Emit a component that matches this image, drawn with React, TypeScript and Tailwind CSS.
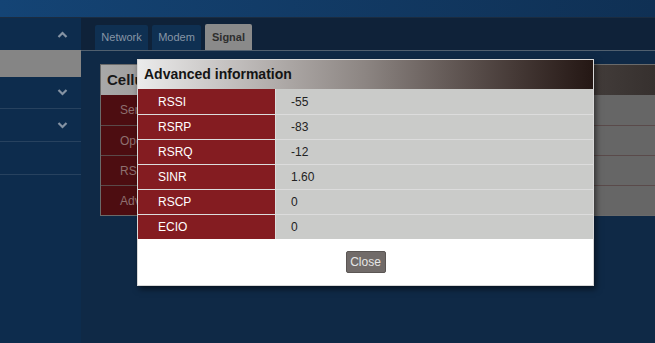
import React from "react";

const rows = [
  { label: "RSSI", value: "-55" },
  { label: "RSRP", value: "-83" },
  { label: "RSRQ", value: "-12" },
  { label: "SINR", value: "1.60" },
  { label: "RSCP", value: "0" },
  { label: "ECIO", value: "0" },
];

const cardRows = ["Serving cell", "Operator", "RSSI", "Advanced information"];

const Chevron = ({ up }: { up?: boolean }) => (
  <svg width="11" height="7" viewBox="0 0 11 7" className="text-[#8593a3]">
    <path
      d={up ? "M1.5 6 L5.5 2 L9.5 6" : "M1.5 1 L5.5 5 L9.5 1"}
      fill="none"
      stroke="currentColor"
      strokeWidth="2.2"
    />
  </svg>
);

const App = () => {
  return (
    <div className="relative w-[655px] h-[343px] overflow-hidden bg-[#0f223b] font-['Liberation_Sans',Arial,sans-serif]">
      {/* header */}
      <div className="h-[18px] bg-gradient-to-r from-[#144475] to-[#0f3054] border-b border-[#1b2c40]" />

      <div className="flex h-[325px]">
        {/* sidebar */}
        <div className="w-[81px] shrink-0 bg-[#0d2c4d] flex flex-col">
          <div className="h-[32px] flex items-center justify-end pr-[13px]">
            <Chevron up />
          </div>
          <div className="h-[27px] bg-[#858585]" />
          <div className="h-[32px] flex items-center justify-end pr-[13px] border-b border-[#27425f]">
            <Chevron />
          </div>
          <div className="h-[33px] flex items-center justify-end pr-[13px] border-b border-[#27425f]">
            <Chevron />
          </div>
          <div className="h-[33px] border-b border-[#27425f]" />
        </div>

        {/* main */}
        <div className="flex-1 min-w-0 flex flex-col">
          <div className="h-[33px] shrink-0 bg-[#0f2239] flex items-end gap-[4px] pl-[14px] border-b border-[#51606f]">
            <div className="w-[53px] h-[25px] flex items-center justify-center bg-[#0f3052] text-[#8796a6] text-[11px] rounded-t-[2px]">
              Network
            </div>
            <div className="w-[49px] h-[25px] flex items-center justify-center bg-[#0f3052] text-[#8796a6] text-[11px] rounded-t-[2px]">
              Modem
            </div>
            <div className="w-[47px] h-[26px] flex items-center justify-center bg-[#8a8a8a] text-[#2e2e2e] text-[11px] font-bold rounded-t-[2px]">
              Signal
            </div>
          </div>

          <div className="flex-1 bg-[#0f2946] pt-[13px] pl-[19px]">
            <div className="w-[600px] border border-[#6a6a6a]">
              <div className="h-[30px] bg-gradient-to-r from-[#a8a8a8] via-[#6a6462] to-[#2e2826] flex items-center pl-[6px] text-[15px] font-bold text-[#181818]">
                Cellular information
              </div>
              {cardRows.map((r, i) => (
                <div
                  key={r}
                  className={`flex h-[30px] ${i > 0 ? "border-t border-[#5a4a4a]" : ""}`}
                >
                  <div className="w-[200px] shrink-0 bg-[#4d0d11] text-[#8e7070] text-[12px] flex items-center pl-[19px] whitespace-nowrap">
                    {r}
                  </div>
                  <div className="flex-1 bg-[#666666]" />
                </div>
              ))}
            </div>
          </div>
        </div>
      </div>

      {/* modal */}
      <div className="absolute left-[137px] top-[59px] w-[457px] bg-white border border-[#d8d8d8] shadow-[2px_3px_6px_rgba(0,0,0,0.55)]">
        <div className="h-[29px] bg-gradient-to-r from-[#ebebeb] via-[#8c8582] to-[#241714] flex items-center pl-[6px] text-[14px] font-bold text-[#141414]">
          Advanced information
        </div>
        {rows.map((r, i) => (
          <div
            key={r.label}
            className={`flex h-[25px] ${i > 0 ? "border-t border-[#dcdcdc]" : ""}`}
          >
            <div className="w-[137px] bg-[#841c21] text-white text-[12px] flex items-center pl-[20px]">
              {r.label}
            </div>
            <div className="flex-1 bg-[#cacbc9] border-l border-[#dcdcdc] text-[#222] text-[12px] flex items-center pl-[15px]">
              {r.value}
            </div>
          </div>
        ))}
        <div className="h-[46px] flex items-center justify-center">
          <button
            type="button"
            className="w-[40px] h-[22px] bg-[#716b69] border border-[#5b5654] rounded-[2px] text-[#e6e6e6] text-[12px]"
          >
            Close
          </button>
        </div>
      </div>
    </div>
  );
};

export default App;
